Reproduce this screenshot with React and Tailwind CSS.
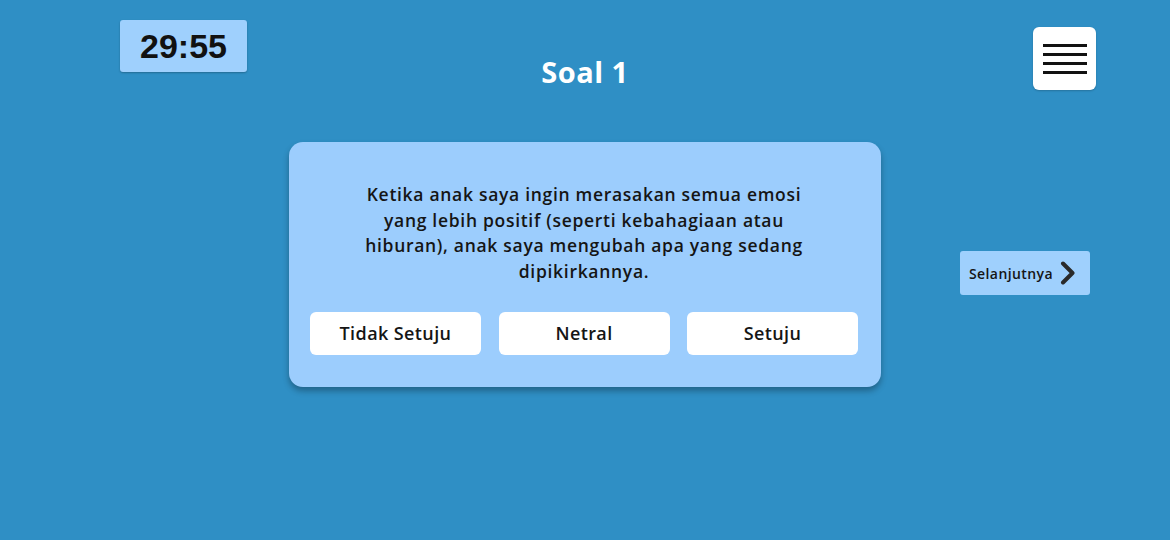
export default function App() {
  const answers = ["Tidak Setuju", "Netral", "Setuju"];

  return (
    <div
      className="w-[1170px] h-[540px] bg-[#2f8fc5] flex flex-col"
      style={{ fontFamily: '"Open Sans", "Noto Sans", sans-serif' }}
    >
      {/* top bar */}
      <div className="grid grid-cols-[1fr_auto_1fr] items-start pt-[20px] h-[90px]">
        <div
          className="justify-self-start ml-[120px] w-[127px] h-[52px] bg-[#9fd0fd] rounded-[3px] shadow-[0_1px_2px_rgba(0,0,0,0.25)] flex items-center justify-center text-[34px] font-bold text-[#111]"
          style={{ fontFamily: '"Liberation Sans", Arial, sans-serif' }}
        >
          29:55
        </div>
        <div className="text-white text-[29px] leading-none font-bold mt-[37px] tracking-[0.5px]">
          Soal 1
        </div>
        <div className="justify-self-end mr-[74px] w-[63px] h-[63px] mt-[7px] bg-white rounded-[6px] shadow-[0_1px_2px_rgba(0,0,0,0.2)] flex flex-col items-center justify-center gap-[6px]">
          <span className="block w-[44px] h-[3px] bg-[#111]" />
          <span className="block w-[44px] h-[3px] bg-[#111]" />
          <span className="block w-[44px] h-[3px] bg-[#111]" />
          <span className="block w-[44px] h-[3px] bg-[#111]" />
        </div>
      </div>

      {/* question row */}
      <div className="flex items-start mt-[52px] pl-[289px]">
        <div className="w-[592px] h-[245px] bg-[#9ccdfd] rounded-[14px] shadow-[0_4px_6px_rgba(0,0,0,0.3)] flex flex-col items-center pt-[40px] pl-[21px] pr-[23px]">
          <p className="text-center text-[17.5px] leading-[25.6px] font-semibold tracking-[0.7px] text-[#151515] whitespace-nowrap">
            Ketika anak saya ingin merasakan semua emosi
            <br />
            yang lebih positif (seperti kebahagiaan atau
            <br />
            hiburan), anak saya mengubah apa yang sedang
            <br />
            dipikirkannya.
          </p>
          <div className="flex mt-[28px] w-full justify-between">
            {answers.map((a) => (
              <button
                key={a}
                className="w-[171px] h-[43px] bg-white rounded-[6px] text-[18px] font-semibold tracking-[0.4px] text-[#151515] flex items-center justify-center"
              >
                {a}
              </button>
            ))}
          </div>
        </div>

        <button className="ml-[79px] mt-[109px] w-[130px] h-[44px] bg-[#9fd0fd] rounded-[3px] flex items-center pl-[9px] gap-[7px] text-[14px] font-semibold tracking-[0.4px] text-[#151515]">
          Selanjutnya
          <svg width="16" height="24" viewBox="0 0 16 24" fill="none">
            <path
              d="M3 2.5 L12.5 12 L3 21.5"
              stroke="#2a2a2a"
              strokeWidth="4"
              strokeLinecap="round"
              strokeLinejoin="round"
            />
          </svg>
        </button>
      </div>
    </div>
  );
}
